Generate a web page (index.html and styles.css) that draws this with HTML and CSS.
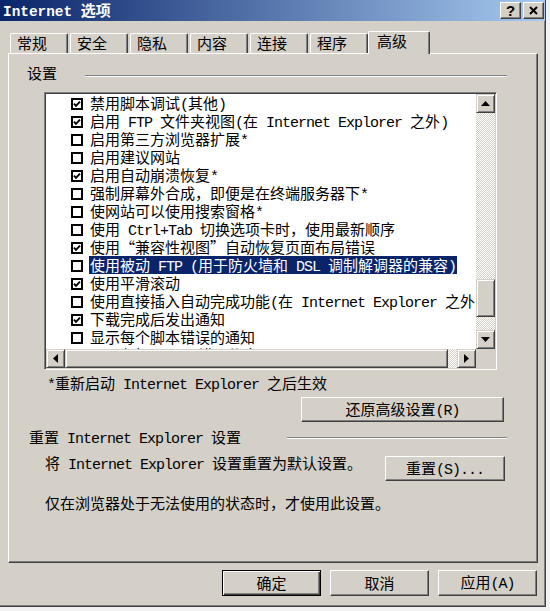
FILE: index.html
```html
<!DOCTYPE html>
<html lang="zh-CN">
<head>
<meta charset="utf-8">
<title>Internet 选项</title>
<link rel="stylesheet" href="styles.css">
</head>
<body>
<div class="window">
  <div class="titlebar">
    <div class="title"><span class="en">Internet </span>选项</div>
    <div class="tbtns">
      <div class="tbtn help">?</div>
      <div class="tbtn"><svg width="9" height="9" viewBox="0 0 9 9"><path d="M1 1 L8 8 M8 1 L1 8" stroke="#000" stroke-width="2" fill="none"/></svg></div>
    </div>
  </div>

  <div class="tabs">
    <div class="tab">常规</div>
    <div class="tab">安全</div>
    <div class="tab">隐私</div>
    <div class="tab">内容</div>
    <div class="tab">连接</div>
    <div class="tab">程序</div>
    <div class="tab active">高级</div>
  </div>

  <div class="panel">
    <div class="ghead">
      <span class="glabel">设置</span>
      <span class="etch grow"></span>
    </div>

    <div class="list">
      <div class="view">
        <div class="row"><span class="cb"><svg class="tick" viewBox="0 0 8 8"><path d="M1 3.6 L3 5.8 L7 1.6"/></svg></span><span class="lbl">禁用脚本调试<span class="en">(</span>其他<span class="en">)</span></span></div>
        <div class="row"><span class="cb"><svg class="tick" viewBox="0 0 8 8"><path d="M1 3.6 L3 5.8 L7 1.6"/></svg></span><span class="lbl">启用<span class="en"> FTP </span>文件夹视图<span class="en">(</span>在<span class="en"> Internet Explorer </span>之外<span class="en">)</span></span></div>
        <div class="row"><span class="cb"></span><span class="lbl">启用第三方浏览器扩展<span class="en">*</span></span></div>
        <div class="row"><span class="cb"></span><span class="lbl">启用建议网站</span></div>
        <div class="row"><span class="cb"><svg class="tick" viewBox="0 0 8 8"><path d="M1 3.6 L3 5.8 L7 1.6"/></svg></span><span class="lbl">启用自动崩溃恢复<span class="en">*</span></span></div>
        <div class="row"><span class="cb"></span><span class="lbl">强制屏幕外合成，即便是在终端服务器下<span class="en">*</span></span></div>
        <div class="row"><span class="cb"></span><span class="lbl">使网站可以使用搜索窗格<span class="en">*</span></span></div>
        <div class="row"><span class="cb"></span><span class="lbl">使用<span class="en"> Ctrl+Tab </span>切换选项卡时，使用最新顺序</span></div>
        <div class="row"><span class="cb"><svg class="tick" viewBox="0 0 8 8"><path d="M1 3.6 L3 5.8 L7 1.6"/></svg></span><span class="lbl">使用<span class="q ql">“</span>兼容性视图<span class="q qr">”</span>自动恢复页面布局错误</span></div>
        <div class="row"><span class="cb"></span><span class="lbl sel">使用被动<span class="en"> FTP (</span>用于防火墙和<span class="en"> DSL </span>调制解调器的兼容<span class="en">)</span></span></div>
        <div class="row"><span class="cb"><svg class="tick" viewBox="0 0 8 8"><path d="M1 3.6 L3 5.8 L7 1.6"/></svg></span><span class="lbl">使用平滑滚动</span></div>
        <div class="row"><span class="cb"></span><span class="lbl">使用直接插入自动完成功能<span class="en">(</span>在<span class="en"> Internet Explorer </span>之外<span class="en">)</span></span></div>
        <div class="row"><span class="cb"><svg class="tick" viewBox="0 0 8 8"><path d="M1 3.6 L3 5.8 L7 1.6"/></svg></span><span class="lbl">下载完成后发出通知</span></div>
        <div class="row"><span class="cb"></span><span class="lbl">显示每个脚本错误的通知</span></div>
        <div class="row"><span class="cb"><svg class="tick" viewBox="0 0 8 8"><path d="M1 3.6 L3 5.8 L7 1.6"/></svg></span><span class="lbl">显示友好<span class="en"> HTTP </span>错误信息</span></div>
      </div>
      <div class="vscroll">
        <div class="sbtn"><svg width="9" height="5" viewBox="0 0 9 5"><polygon points="4.5,0 9,5 0,5"/></svg></div>
        <div class="track vt1"></div>
        <div class="sbtn vthumb"></div>
        <div class="track grow"></div>
        <div class="sbtn"><svg width="9" height="5" viewBox="0 0 9 5"><polygon points="0,0 9,0 4.5,5"/></svg></div>
      </div>
      <div class="hscroll">
        <div class="sbtn"><svg width="5" height="9" viewBox="0 0 5 9"><polygon points="5,0 5,9 0,4.5"/></svg></div>
        <div class="sbtn hthumb"></div>
        <div class="track grow"></div>
        <div class="sbtn"><svg width="5" height="9" viewBox="0 0 5 9"><polygon points="0,0 5,4.5 0,9"/></svg></div>
      </div>
      <div class="corner"></div>
    </div>

    <div class="note"><span class="en">*</span>重新启动<span class="en"> Internet Explorer </span>之后生效</div>

    <div class="restore-row">
      <button class="btn restore">还原高级设置<span class="en">(R)</span></button>
    </div>

    <div class="ghead reset-head">
      <span class="glabel reset-label">重置<span class="en"> Internet Explorer </span>设置</span>
      <span class="etch short"></span>
    </div>

    <div class="reset-row">
      <span class="desc">将<span class="en"> Internet Explorer </span>设置重置为默认设置。</span>
      <button class="btn reset">重置<span class="en">(S)...</span></button>
    </div>

    <div class="desc last">仅在浏览器处于无法使用的状态时，才使用此设置。</div>
  </div>

  <div class="footer">
    <button class="btn fbtn default">确定</button>
    <button class="btn fbtn">取消</button>
    <button class="btn fbtn">应用<span class="en">(A)</span></button>
  </div>
</div>
</body>
</html>
```

FILE: styles.css
```css
html, body {
  margin: 0;
  padding: 0;
}

body {
  background: #f2f2f2;
  font-family: "Noto Sans CJK SC", "Noto Sans", sans-serif;
  font-size: 15px;
  color: #000;
}

.en {
  font-family: "Liberation Mono", "DejaVu Sans Mono", monospace;
  font-size: 15px;
  letter-spacing: -1px;
}

.window {
  width: 546px;
  height: 607px;
  box-sizing: border-box;
  background: #d4d0c8;
  border-right: 1px solid #404040;
  border-bottom: 1px solid #404040;
  box-shadow: inset -1px -1px #808080;
}

/* title bar */
.titlebar {
  height: 21px;
  display: flex;
  align-items: center;
  justify-content: space-between;
  padding: 0 1px 0 3px;
  background: linear-gradient(90deg, #0a246a 0%, #a6caf0 100%);
}

.title {
  color: #fff;
  font-weight: bold;
  font-size: 15px;
  line-height: 21px;
  white-space: nowrap;
}

.title .en {
  font-size: 14.4px;
  font-weight: bold;
  letter-spacing: 0;
}

.tbtns {
  display: flex;
  gap: 2px;
}

.tbtn {
  width: 21px;
  height: 17px;
  box-sizing: border-box;
  background: #d4d0c8;
  border: 1px solid;
  border-color: #fff #404040 #404040 #fff;
  box-shadow: inset -1px -1px #808080;
  display: flex;
  align-items: center;
  justify-content: center;
}

.tbtn.help {
  font-family: "Liberation Sans", Arial, sans-serif;
  font-weight: bold;
  font-size: 15px;
  line-height: 15px;
}

/* tabs */
.tabs {
  display: flex;
  align-items: flex-start;
  gap: 2px;
  height: 22px;
  margin-top: 10px;
  padding-left: 10px;
}

.tab {
  width: 58px;
  height: 20px;
  margin-top: 2px;
  box-sizing: border-box;
  border: 1px solid;
  border-color: #fff #404040 transparent #fff;
  border-bottom: 0;
  border-radius: 2px 2px 0 0;
  box-shadow: inset -1px 0 #808080;
  padding-left: 6px;
  line-height: 18px;
  white-space: nowrap;
}

.tab.active {
  width: 62px;
  height: 23px;
  margin: 0 0 0 -2px;
  padding-left: 8px;
  background: #d4d0c8;
  position: relative;
  z-index: 1;
}

/* panel */
.panel {
  margin-left: 8px;
  width: 530px;
  height: 510px;
  box-sizing: border-box;
  border: 1px solid;
  border-color: #fff #404040 #404040 #fff;
  box-shadow: inset -1px -1px #808080;
  display: flex;
  flex-direction: column;
}

.ghead {
  display: flex;
  align-items: flex-start;
  margin-top: 10px;
  padding-left: 18px;
  line-height: 18px;
  white-space: nowrap;
}

.etch {
  height: 0;
  margin-top: 11px;
  border-top: 1px solid #808080;
  border-bottom: 1px solid #fff;
}

.etch.grow {
  flex: 1;
  margin-left: 28px;
  margin-right: 30px;
}

.reset-head {
  margin-top: 6px;
  padding-left: 20px;
}

.reset-head .etch {
  margin-top: 9px;
}

.etch.short {
  width: 220px;
  margin-left: auto;
  margin-right: 30px;
}

/* list box */
.list {
  margin: 10px 0 0 35px;
  width: 453px;
  height: 278px;
  box-sizing: border-box;
  border: 1px solid;
  border-color: #808080 #fff #fff #808080;
  box-shadow: inset 1px 1px #404040, inset -1px -1px #d4d0c8;
  padding: 1px;
  display: grid;
  grid-template-columns: 430px 19px;
  grid-template-rows: 255px 19px;
}

.view {
  background: #fff;
  overflow: hidden;
}

.row {
  display: flex;
  align-items: center;
  height: 18px;
  padding-left: 25px;
  line-height: 18px;
  white-space: nowrap;
}

.cb {
  flex: none;
  width: 12px;
  height: 12px;
  margin-top: 2px;
  margin-right: 6px;
  box-sizing: border-box;
  border: 2px solid #000;
  background: #fff;
  display: flex;
  align-items: center;
  justify-content: center;
}

.tick {
  width: 8px;
  height: 8px;
  fill: none;
  stroke: #000;
  stroke-width: 1.9;
}

.lbl {
  padding: 0 1px;
  height: 18px;
}

.lbl.sel {
  background: #0a246a;
  color: #fff;
}

.q {
  display: inline-block;
  width: 15px;
}

.ql {
  text-align: right;
}

.qr {
  text-align: left;
}

/* scrollbars */
.vscroll {
  display: flex;
  flex-direction: column;
}

.hscroll {
  display: flex;
}

.sbtn {
  flex: none;
  width: 19px;
  height: 19px;
  box-sizing: border-box;
  background: #d4d0c8;
  border: 1px solid;
  border-color: #d4d0c8 #404040 #404040 #d4d0c8;
  box-shadow: inset 1px 1px #fff, inset -1px -1px #808080;
  display: flex;
  align-items: center;
  justify-content: center;
}

.sbtn svg {
  fill: #000;
}

.vthumb {
  height: 38px;
}

.hthumb {
  width: 383px;
}

.track {
  background: repeating-conic-gradient(#fff 0 25%, #d4d0c8 0 50%) 0 0 / 2px 2px;
}

.vt1 {
  height: 166px;
  flex: none;
}

.track.grow {
  flex: 1;
}

.corner {
  background: #d4d0c8;
}

/* texts and buttons */
.note {
  margin: 4px 0 0 38px;
  line-height: 18px;
  white-space: nowrap;
}

.restore-row {
  display: flex;
  margin-top: 2px;
  padding-left: 292px;
}

.btn {
  box-sizing: border-box;
  height: 25px;
  padding: 0;
  margin: 0;
  background: #d4d0c8;
  border: 1px solid;
  border-color: #fff #404040 #404040 #fff;
  box-shadow: inset -1px -1px #808080;
  font-family: inherit;
  font-size: 15px;
  line-height: 21px;
  color: #000;
  white-space: nowrap;
}

.restore {
  width: 203px;
}

.reset-row {
  display: flex;
  align-items: flex-start;
  margin-top: 5px;
  padding-left: 36px;
  padding-right: 32px;
  line-height: 18px;
}

.desc {
  white-space: nowrap;
  line-height: 18px;
}

.reset {
  width: 120px;
  margin-left: auto;
  margin-top: 2px;
}

.desc.last {
  margin: 13px 0 0 36px;
}

/* footer */
.footer {
  display: flex;
  gap: 9px;
  margin-top: 7px;
  padding-left: 222px;
}

.fbtn {
  width: 99px;
  height: 26px;
  line-height: 22px;
}

.fbtn.default {
  border-color: #000;
  box-shadow: inset 1px 1px #fff, inset -1px -1px #404040, inset -2px -2px #808080;
}
```
